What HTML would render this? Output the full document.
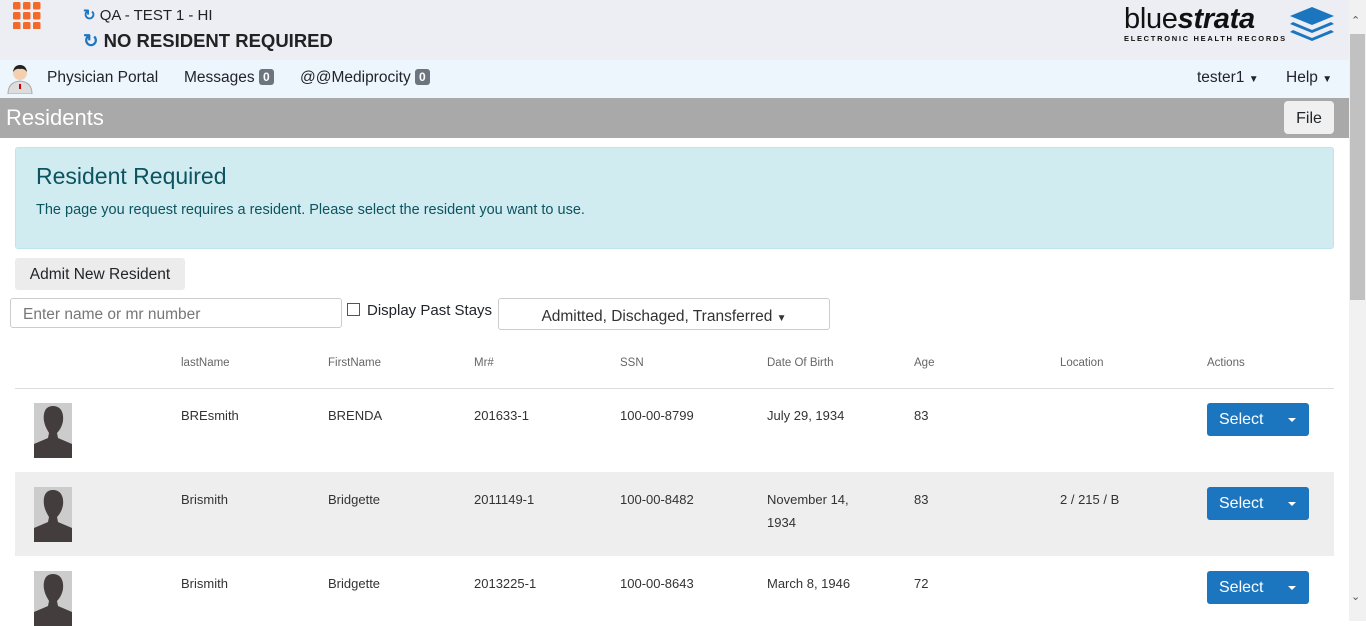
<!DOCTYPE html>
<html><head><meta charset="utf-8"><style>
*{box-sizing:border-box;margin:0;padding:0}
body{width:1366px;height:621px;overflow:hidden;font-family:"Liberation Sans",sans-serif;background:#fff;position:relative;color:#212529}
.a{position:absolute}
.top{left:0;top:0;width:1349px;height:60px;background:#ededf4}
.nav{left:0;top:60px;width:1349px;height:38px;background:#eef6fd}
.bar{left:0;top:98px;width:1349px;height:40px;background:#a9a9a9}
.sb{left:1349px;top:0;width:17px;height:621px;background:#f1f1f1}
.th{font-size:11.5px;color:#666;top:357px}
.td{font-size:13px;color:#333}
.sel{width:102px;height:33px;background:#1b75bf;border-radius:3px;color:#fff;font-size:16px;line-height:33px;padding-left:12px}
.sel:after{content:"";position:absolute;right:13px;top:15px;border:4.5px solid transparent;border-top:4.5px solid #fff;border-bottom:0}
.av{width:38px;height:55px;background:#ccc;overflow:hidden}
.badge{display:inline-block;background:#6c757d;color:#fff;font-size:12px;font-weight:bold;padding:1px 4px;border-radius:3px;vertical-align:1px}
.f15{font-size:15.5px}
</style></head><body>
<div class="a top"></div>
<div class="a" style="left:13px;top:2px;width:28px;height:27px">
<svg width="28" height="27"><g fill="#f26a2a">
<rect x="0" y="0" width="7.5" height="7.5" rx="1.5"/><rect x="10" y="0" width="7.5" height="7.5" rx="1.5"/><rect x="20" y="0" width="7.5" height="7.5" rx="1.5"/>
<rect x="0" y="10" width="7.5" height="7.5" rx="1.5"/><rect x="10" y="10" width="7.5" height="7.5" rx="1.5"/><rect x="20" y="10" width="7.5" height="7.5" rx="1.5"/>
<rect x="0" y="20" width="7.5" height="7.5" rx="1.5"/><rect x="10" y="20" width="7.5" height="7.5" rx="1.5"/><rect x="20" y="20" width="7.5" height="7.5" rx="1.5"/></g></svg></div>
<div class="a" style="left:83px;top:6px;font-size:15px;color:#222"><span style="color:#1b75bf;font-weight:bold">&#x21bb;</span> QA - TEST 1 - HI</div>
<div class="a" style="left:83px;top:30px;font-size:18.5px;font-weight:bold;color:#222"><span style="color:#1b75bf">&#x21bb;</span> NO RESIDENT REQUIRED</div>
<div class="a" style="left:1124px;top:3px;font-size:29px;letter-spacing:-0.3px;color:#111;line-height:32px"><span>blue</span><b style="font-style:italic">strata</b></div>
<div class="a" style="left:1124px;top:34px;font-size:7.5px;font-weight:bold;letter-spacing:1.7px;color:#111">ELECTRONIC HEALTH RECORDS</div>
<svg class="a" style="left:1289px;top:7px" width="46" height="34"><g fill="#1b75bf"><path d="M23 0L45 9L23 18L1 9Z"/><path d="M4 15L23 23L42 15L45 17L23 26L1 17Z"/><path d="M4 23L23 31L42 23L45 25L23 34L1 25Z"/></g></svg>
<div class="a nav"></div>
<svg class="a" style="left:6px;top:64px" width="28" height="30"><circle cx="14" cy="9" r="7" fill="#f3d0b0"/><path d="M7 8Q8 1 14 1Q20 1 21 8Q18 4 14 5Q10 4 7 8Z" fill="#222"/><path d="M2 30Q2 18 14 17Q26 18 26 30Z" fill="#ddd" stroke="#aaa"/><rect x="13" y="20" width="2" height="5" fill="#c00"/></svg>
<div class="a f15" style="left:47px;top:69px">Physician Portal</div>
<div class="a f15" style="left:184px;top:69px">Messages <span class="badge">0</span></div>
<div class="a f15" style="left:300px;top:69px">@@Mediprocity <span class="badge">0</span></div>
<div class="a f15" style="left:1197px;top:69px">tester1 <span style="font-size:10px">&#9660;</span></div>
<div class="a f15" style="left:1286px;top:69px">Help <span style="font-size:10px">&#9660;</span></div>
<div class="a bar"></div>
<div class="a" style="left:6px;top:105px;font-size:22px;color:#fff">Residents</div>
<div class="a" style="left:1284px;top:101px;width:50px;height:33px;background:#f0f0f0;border-radius:4px;font-size:16px;line-height:35px;text-align:center">File</div>
<div class="a" style="left:15px;top:147px;width:1319px;height:102px;background:#d1ecf1;border:1px solid #bee5eb;border-radius:3px"></div>
<div class="a" style="left:36px;top:163px;font-size:23px;color:#0c5460">Resident Required</div>
<div class="a" style="left:36px;top:202px;font-size:14.5px;color:#0c5460">The page you request requires a resident. Please select the resident you want to use.</div>
<div class="a" style="left:15px;top:258px;width:170px;height:32px;background:#ececec;border-radius:3px;font-size:15.5px;line-height:34px;text-align:center">Admit New Resident</div>
<div class="a" style="left:10px;top:298px;width:332px;height:30px;border:1px solid #ccc;border-radius:3px;font-size:15.5px;line-height:32px;padding-left:12px;color:#777">Enter name or mr number</div>
<div class="a" style="left:347px;top:303px;width:13px;height:13px;border:1px solid #555;background:#fff"></div>
<div class="a" style="left:367px;top:302px;font-size:15px">Display Past Stays</div>
<div class="a" style="left:498px;top:298px;width:332px;height:32px;border:1px solid #ccc;border-radius:3px;font-size:15.5px;line-height:35px;text-align:center;color:#333">Admitted, Dischaged, Transferred <span style="font-size:10px">&#9660;</span></div>
<div class="a th" style="left:181px">lastName</div><div class="a th" style="left:328px">FirstName</div><div class="a th" style="left:474px">Mr#</div><div class="a th" style="left:620px">SSN</div><div class="a th" style="left:767px">Date Of Birth</div><div class="a th" style="left:914px">Age</div><div class="a th" style="left:1060px">Location</div><div class="a th" style="left:1207px">Actions</div>
<div class="a" style="left:15px;top:388px;width:1319px;height:1px;background:#ddd"></div>
<div class="a" style="left:15px;top:472px;width:1319px;height:84px;background:#eee"></div>
<div class="a av" style="left:34px;top:403px"><svg width="38" height="55"><path d="M19 3C11 3 9 10 10 18C11 24 14 28 15 30L14 35L0 41V55H38V41L24 35L23 30C25 28 28 24 29 18C30 10 27 3 19 3Z" fill="#433d3d"/></svg></div>
<div class="a td" style="left:181px;top:408px">BREsmith</div><div class="a td" style="left:328px;top:408px">BRENDA</div><div class="a td" style="left:474px;top:408px">201633-1</div><div class="a td" style="left:620px;top:408px">100-00-8799</div><div class="a td" style="left:767px;top:408px">July 29, 1934</div><div class="a td" style="left:914px;top:408px">83</div>
<div class="a sel" style="left:1207px;top:403px">Select</div>
<div class="a av" style="left:34px;top:487px"><svg width="38" height="55"><path d="M19 3C11 3 9 10 10 18C11 24 14 28 15 30L14 35L0 41V55H38V41L24 35L23 30C25 28 28 24 29 18C30 10 27 3 19 3Z" fill="#433d3d"/></svg></div>
<div class="a td" style="left:181px;top:492px">Brismith</div><div class="a td" style="left:328px;top:492px">Bridgette</div><div class="a td" style="left:474px;top:492px">2011149-1</div><div class="a td" style="left:620px;top:492px">100-00-8482</div><div class="a td" style="left:767px;top:492px;line-height:23px;margin-top:-4px">November 14,<br>1934</div><div class="a td" style="left:914px;top:492px">83</div><div class="a td" style="left:1060px;top:492px">2 / 215 / B</div>
<div class="a sel" style="left:1207px;top:487px">Select</div>
<div class="a av" style="left:34px;top:571px"><svg width="38" height="55"><path d="M19 3C11 3 9 10 10 18C11 24 14 28 15 30L14 35L0 41V55H38V41L24 35L23 30C25 28 28 24 29 18C30 10 27 3 19 3Z" fill="#433d3d"/></svg></div>
<div class="a td" style="left:181px;top:576px">Brismith</div><div class="a td" style="left:328px;top:576px">Bridgette</div><div class="a td" style="left:474px;top:576px">2013225-1</div><div class="a td" style="left:620px;top:576px">100-00-8643</div><div class="a td" style="left:767px;top:576px">March 8, 1946</div><div class="a td" style="left:914px;top:576px">72</div>
<div class="a sel" style="left:1207px;top:571px">Select</div>
<div class="a sb"></div>
<div class="a" style="left:1350px;top:34px;width:15px;height:266px;background:#c1c1c1"></div>
<div class="a" style="left:1351px;top:14px;font-size:11px;color:#555">&#8963;</div>
<div class="a" style="left:1351px;top:590px;font-size:11px;color:#555">&#8964;</div>
</body></html>
